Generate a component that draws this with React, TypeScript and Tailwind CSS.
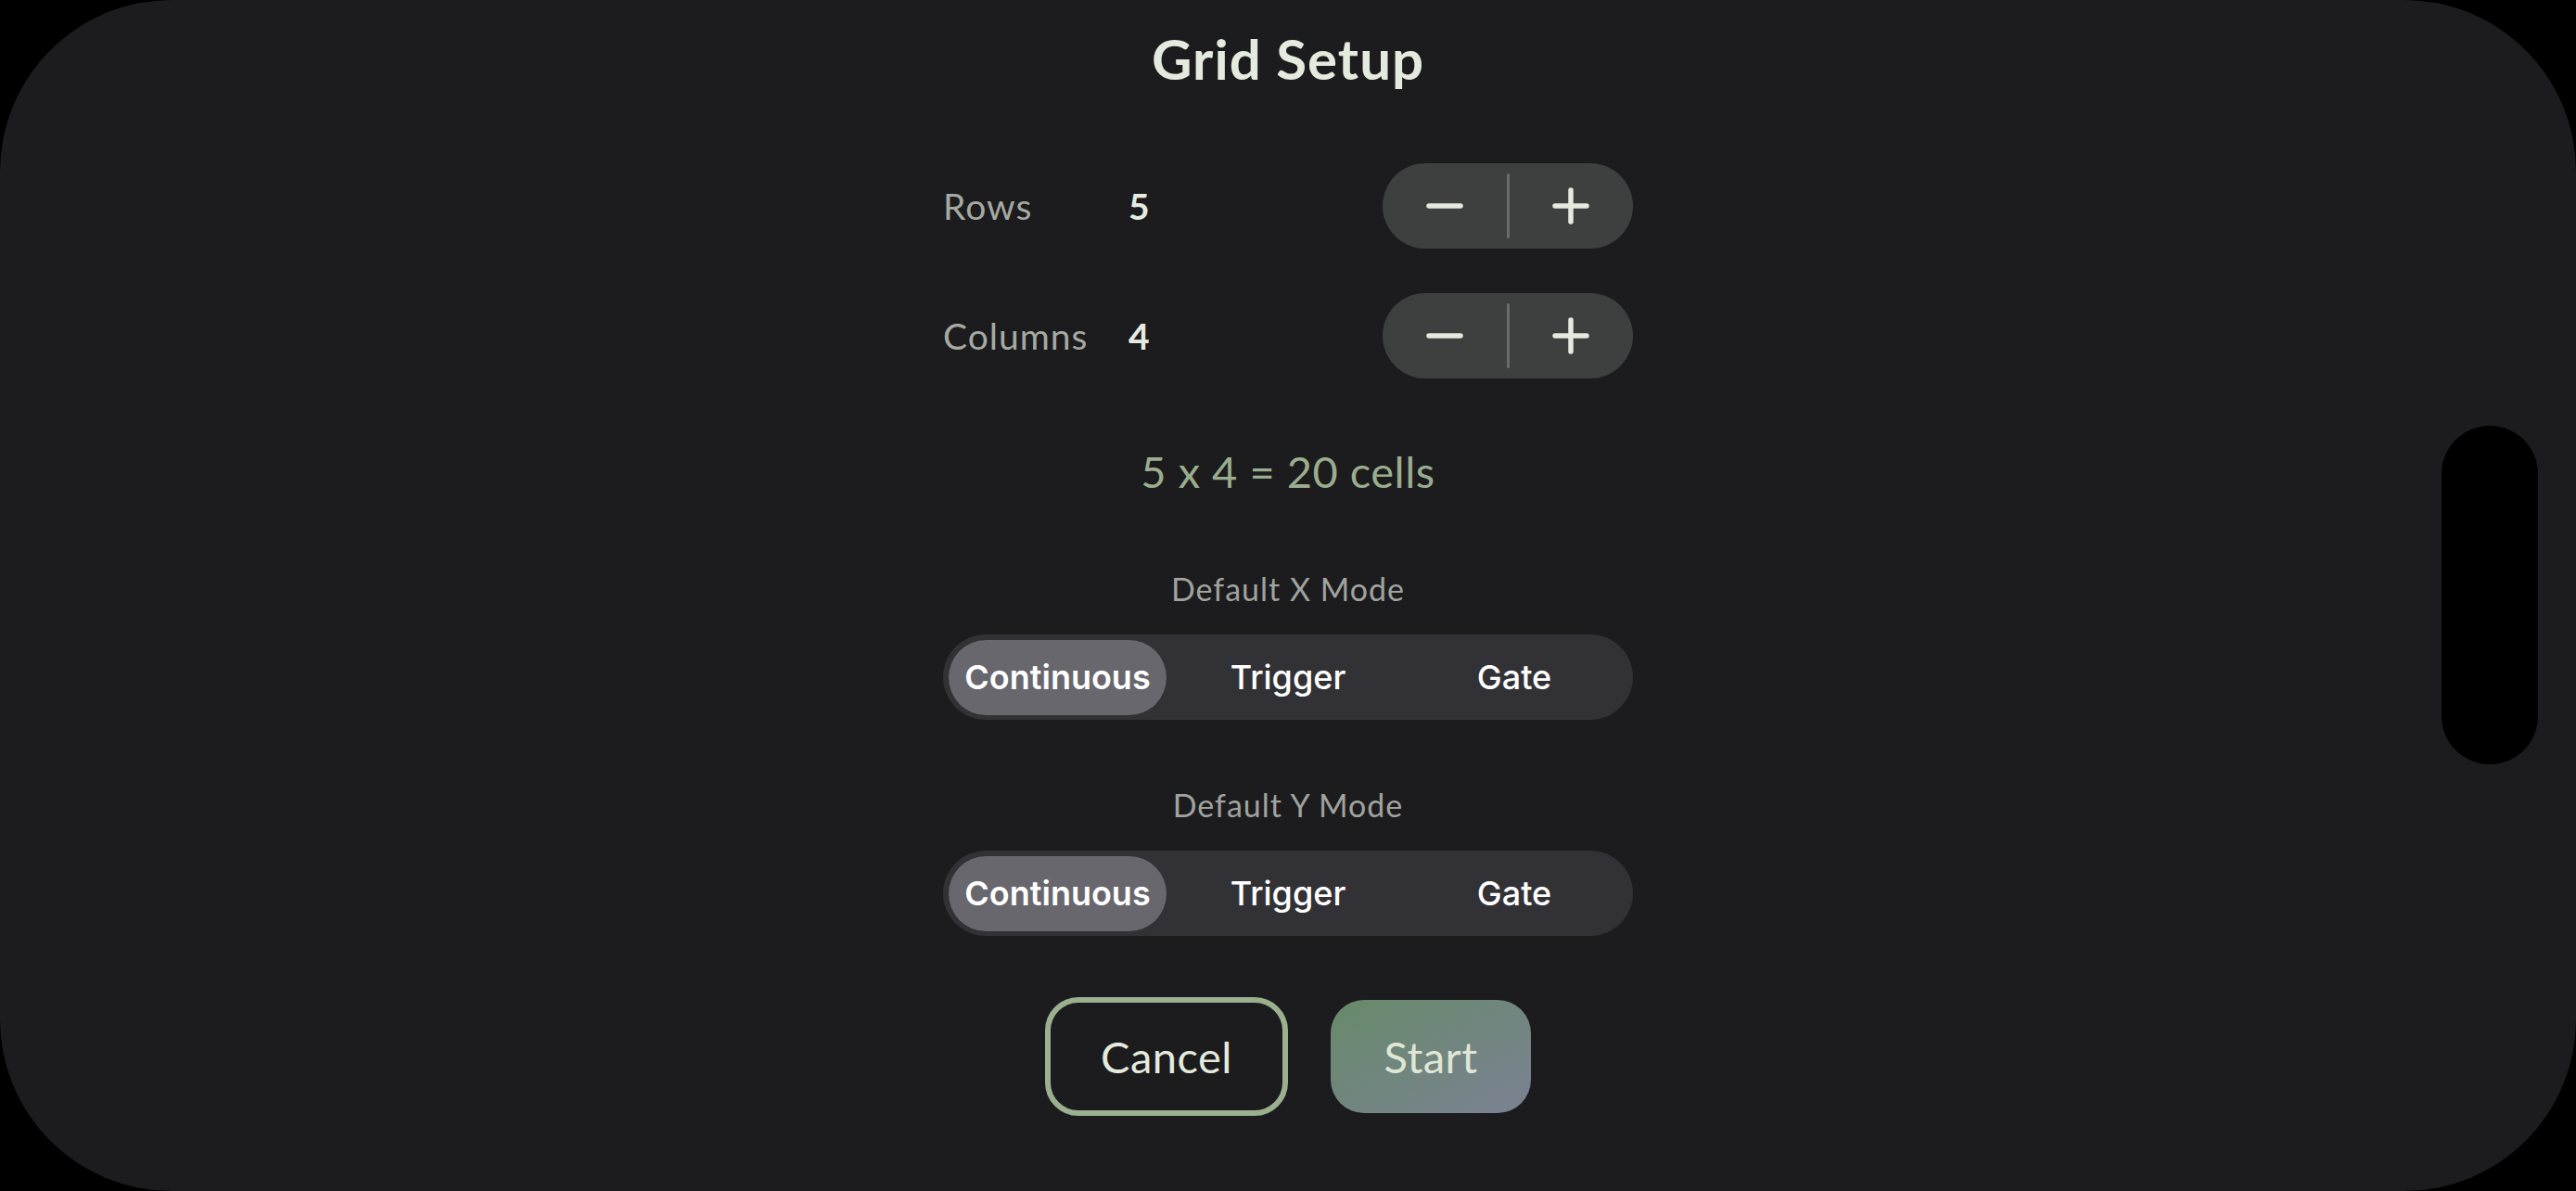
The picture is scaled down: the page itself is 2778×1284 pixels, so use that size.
import React, { useState } from 'react';

const MODES = ['Continuous', 'Trigger', 'Gate'];

function Stepper({ onMinus, onPlus }: { onMinus: () => void; onPlus: () => void }) {
  return (
    <div className="flex h-[92px] w-[270px] items-center rounded-full bg-[#3e403f]">
      <button onClick={onMinus} className="flex h-full flex-1 items-center justify-center">
        <svg width="40" height="40" viewBox="0 0 40 40">
          <line x1="3" y1="20" x2="37" y2="20" stroke="#e4eadd" strokeWidth="5.5" strokeLinecap="round" />
        </svg>
      </button>
      <div className="h-[70px] w-[3px] rounded-full bg-[#6a6c6b]" />
      <button onClick={onPlus} className="flex h-full flex-1 items-center justify-center">
        <svg width="40" height="40" viewBox="0 0 40 40">
          <line x1="3" y1="20" x2="37" y2="20" stroke="#e4eadd" strokeWidth="5.5" strokeLinecap="round" />
          <line x1="20" y1="3" x2="20" y2="37" stroke="#e4eadd" strokeWidth="5.5" strokeLinecap="round" />
        </svg>
      </button>
    </div>
  );
}

function Segmented({ value, onChange }: { value: string; onChange: (v: string) => void }) {
  return (
    <div className="grid h-[92px] w-[744px] grid-cols-3 items-center rounded-full bg-[#323236] px-[6px] font-['Inter',sans-serif] text-[36px] text-white">
      {MODES.map((m, i) => (
        <button
          key={m}
          onClick={() => onChange(m)}
          className={`flex h-[81px] w-[235px] items-center justify-center rounded-full leading-none ${
            i === 0 ? 'justify-self-start' : 'justify-self-center'
          } ${value === m ? 'bg-[#68676d] font-semibold' : 'font-medium'}`}
        >
          {m}
        </button>
      ))}
    </div>
  );
}

export default function App() {
  const [rows, setRows] = useState(5);
  const [cols, setCols] = useState(4);
  const [xMode, setXMode] = useState('Continuous');
  const [yMode, setYMode] = useState('Continuous');

  return (
    <div className="relative h-screen w-full overflow-hidden bg-black">
      <div className="flex h-full w-full flex-col items-center rounded-[185px] bg-[#1c1c1e] font-['Lato',sans-serif]">
        <h1 className="mt-[23px] flex h-[80px] items-center text-[60px] font-bold leading-none tracking-[1px] text-[#e4eadd]">
          Grid Setup
        </h1>

        {/* rows / columns */}
        <div className="mt-[73px] flex w-[744px] flex-col gap-[48px]">
          <div className="flex items-center">
            <span className="w-[200px] text-[39px] tracking-[1px] text-[#a5aaa2]">Rows</span>
            <span className="flex-1 text-[39px] font-bold text-[#e6ebe1]">{rows}</span>
            <Stepper onMinus={() => setRows(r => Math.max(1, r - 1))} onPlus={() => setRows(r => r + 1)} />
          </div>
          <div className="flex items-center">
            <span className="w-[200px] text-[39px] tracking-[1px] text-[#a5aaa2]">Columns</span>
            <span className="flex-1 text-[39px] font-bold text-[#e6ebe1]">{cols}</span>
            <Stepper onMinus={() => setCols(c => Math.max(1, c - 1))} onPlus={() => setCols(c => c + 1)} />
          </div>
        </div>

        <p className="mt-[70px] flex h-[60px] items-center text-[47px] leading-none tracking-[0.5px] text-[#9aad8e]">
          {rows} x {cols} = {rows * cols} cells
        </p>

        {/* modes */}
        <p className="mt-[77px] flex h-[40px] items-center text-[34px] leading-none tracking-[1px] text-[#a0a39e]">Default X Mode</p>
        <div className="mt-[29px]">
          <Segmented value={xMode} onChange={setXMode} />
        </div>
        <p className="mt-[72px] flex h-[40px] items-center text-[34px] leading-none tracking-[1px] text-[#a0a39e]">Default Y Mode</p>
        <div className="mt-[29px]">
          <Segmented value={yMode} onChange={setYMode} />
        </div>

        {/* actions */}
        <div className="mt-[66px] flex items-center gap-[46px]">
          <button className="flex h-[128px] w-[262px] items-center justify-center rounded-[36px] border-[6px] border-[#9bb08f] text-[47px] tracking-[0.5px] text-[#e4eadd]">
            Cancel
          </button>
          <button className="flex h-[122px] w-[216px] items-center justify-center rounded-[36px] bg-gradient-to-br from-[#678a69] to-[#7b8193] text-[47px] tracking-[0.5px] text-[#dfe6d6]">
            Start
          </button>
        </div>
      </div>

      {/* camera cutout */}
      <div className="absolute right-[41px] top-[459px] h-[365px] w-[104px] rounded-[52px] bg-black" />
    </div>
  );
}
